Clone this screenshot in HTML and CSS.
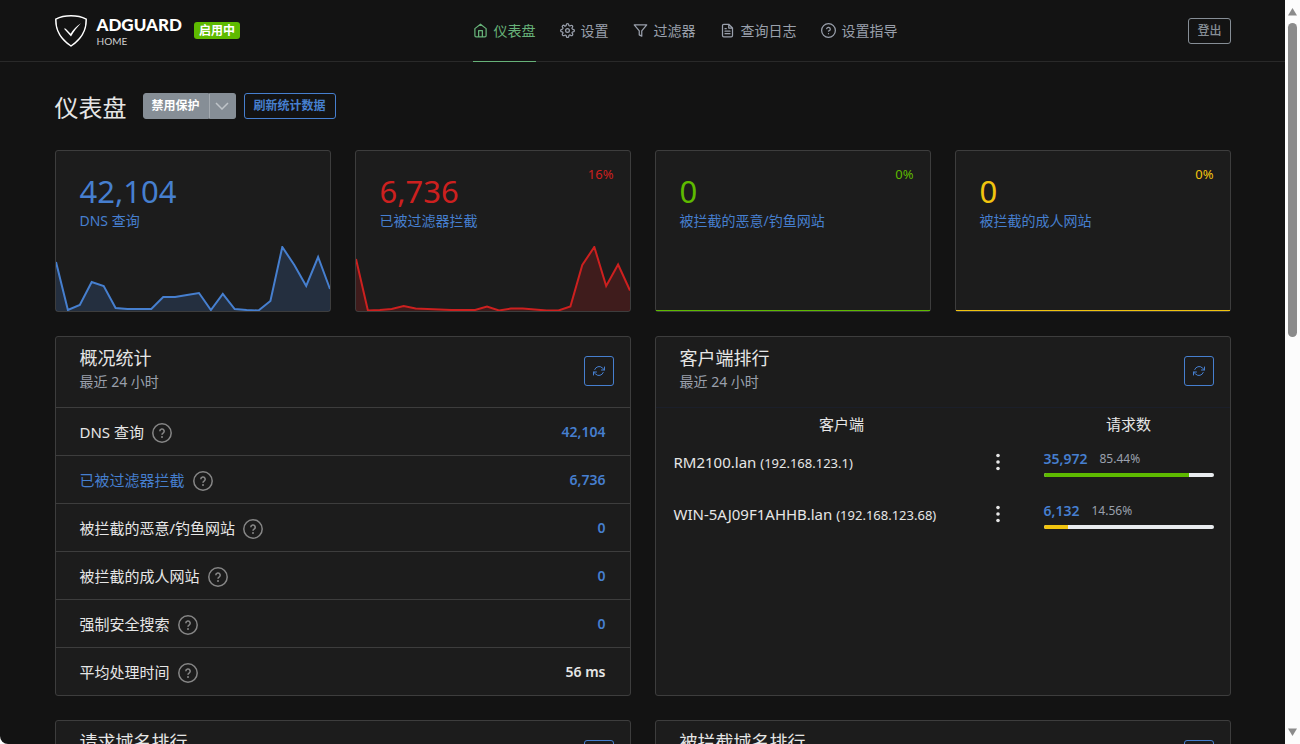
FILE: index.html
```html
<!DOCTYPE html>
<html lang="zh-CN">

<head>
  <meta charset="utf-8">
  <meta name="viewport" content="width=device-width, initial-scale=1">
  <title>AdGuard Home</title>
  <link rel="stylesheet" href="styles.css">
</head>

<body>
  <!-- shared icons -->
  <svg class="sprite" aria-hidden="true">
    <symbol id="icon-help" viewBox="0 0 20 20">
      <circle cx="10" cy="10" r="9.2" fill="none" stroke="currentColor" stroke-width="1.5" />
      <path d="M7.8 8.2a2.200 2.200 0 1 1 3.300 1.900c-.8.5-1.100.9-1.100 1.700" fill="none" stroke="currentColor" stroke-width="1.6" />
      <circle cx="10" cy="13.900" r="1" fill="currentColor" />
    </symbol>
    <symbol id="icon-refresh" viewBox="0 0 24 24">
      <path d="M23 4v6h-6M1 20v-6h6M3.5 9a9 9 0 0 1 14.9-3.4L23 10M1 14l4.6 4.4A9 9 0 0 0 20.5 15" fill="none" stroke="currentColor" stroke-width="2" stroke-linecap="round" stroke-linejoin="round" />
    </symbol>
    <symbol id="icon-dots" viewBox="0 0 24 24">
      <g fill="currentColor">
        <circle cx="12" cy="5.500" r="1.800" />
        <circle cx="12" cy="12" r="1.800" />
        <circle cx="12" cy="18.500" r="1.800" />
      </g>
    </symbol>
  </svg>

  <div class="app">
    <header class="header">
      <div class="container header-row">
        <div class="brand">
          <a href="#" class="logo">
            <svg class="logo-shield" viewBox="0 0 32 32" fill="none" aria-hidden="true">
              <path d="M16 .8C11 .8 5 2 .8 4.200c0 4.600-.5 16.300 15.200 26.800C31.700 20.500 31.200 8.800 31.200 4.200 27 2 21 .8 16 .8Z" stroke="#fff" stroke-width="1.500" />
              <path d="M9 13.800c1-.7 1.900-.1 2.500.6l4.100 4.400c2.500-4 6-8 10.300-10.600-3.500 3.600-7 8.200-9.900 13.200Z" fill="#fff" />
            </svg>
            <span class="logo-text">
              <span class="logo-name">ADGUARD</span>
              <span class="logo-sub">HOME</span>
            </span>
          </a>
          <span class="badge">启用中</span>
        </div>

        <nav class="nav">
          <a href="#" class="nav-link active">
            <svg class="nav-icon" viewBox="0 0 24 24"><path d="M3 9l9-7 9 7v11a2 2 0 0 1-2 2H5a2 2 0 0 1-2-2zM9 22V12h6v10" /></svg>
            仪表盘
          </a>
          <a href="#" class="nav-link">
            <svg class="nav-icon" viewBox="0 0 24 24">
              <circle cx="12" cy="12" r="3" />
              <path d="M19.400 15a1.650 1.650 0 0 0 .33 1.820l.06.06a2 2 0 1 1-2.830 2.830l-.06-.06a1.650 1.650 0 0 0-2.800 1.170V21a2 2 0 1 1-4 0v-.09A1.650 1.650 0 0 0 9 19.400a1.650 1.650 0 0 0-1.820.33l-.06.06a2 2 0 1 1-2.830-2.830l.06-.06a1.650 1.650 0 0 0-1.170-2.800H3a2 2 0 1 1 0-4h.09A1.650 1.650 0 0 0 4.600 9a1.650 1.650 0 0 0-.33-1.820l-.06-.06a2 2 0 1 1 2.830-2.830l.06.06A1.650 1.650 0 0 0 9 4.680 1.650 1.650 0 0 0 10 3.170V3a2 2 0 1 1 4 0v.09a1.650 1.650 0 0 0 2.820 1.170l.06-.06a2 2 0 1 1 2.830 2.830l-.06.06A1.650 1.650 0 0 0 20.830 10H21a2 2 0 1 1 0 4h-.09a1.650 1.650 0 0 0-1.510 1z" />
            </svg>
            设置
          </a>
          <a href="#" class="nav-link">
            <svg class="nav-icon" viewBox="0 0 24 24"><path d="M22 3H2l8 9.460V19l4 2v-8.540L22 3z" /></svg>
            过滤器
          </a>
          <a href="#" class="nav-link">
            <svg class="nav-icon" viewBox="0 0 24 24"><path d="M14 2H6a2 2 0 0 0-2 2v16a2 2 0 0 0 2 2h12a2 2 0 0 0 2-2V8zM14 2v6h6M16 13H8M16 17H8M10 9H8" /></svg>
            查询日志
          </a>
          <a href="#" class="nav-link">
            <svg class="nav-icon" viewBox="0 0 24 24"><circle cx="12" cy="12" r="11" /><path d="M9.100 9a3 3 0 0 1 5.800 1c0 2-3 3-3 3M12 17h.01" /></svg>
            设置指导
          </a>
        </nav>

        <button class="btn btn-secondary">登出</button>
      </div>
    </header>

    <main class="container">
      <div class="page-header">
        <h1 class="page-title">仪表盘</h1>
        <div class="btn-group">
          <button class="btn btn-gray">禁用保护</button>
          <button class="btn btn-gray btn-caret" aria-label="更多">
            <svg class="caret" viewBox="0 0 14 8"><path d="M1 1l6 6 6-6" /></svg>
          </button>
        </div>
        <button class="btn btn-primary">刷新统计数据</button>
      </div>

      <div class="counters">
        <section class="card counter blue">
          <div class="counter-value">42,104</div>
          <a href="#" class="counter-label">DNS 查询</a>
          <svg class="chart" viewBox="0 0 274 65" preserveAspectRatio="none"></svg>
        </section>
        <section class="card counter red">
          <div class="counter-percent">16%</div>
          <div class="counter-value">6,736</div>
          <a href="#" class="counter-label">已被过滤器拦截</a>
          <svg class="chart" viewBox="0 0 274 65" preserveAspectRatio="none"></svg>
        </section>
        <section class="card counter green">
          <div class="counter-percent">0%</div>
          <div class="counter-value">0</div>
          <a href="#" class="counter-label">被拦截的恶意/钓鱼网站</a>
          <div class="flat-line"></div>
        </section>
        <section class="card counter yellow">
          <div class="counter-percent">0%</div>
          <div class="counter-value">0</div>
          <a href="#" class="counter-label">被拦截的成人网站</a>
          <div class="flat-line"></div>
        </section>
      </div>

      <div class="panels">
        <section class="card">
          <div class="card-header">
            <div>
              <h2 class="card-title">概况统计</h2>
              <div class="card-subtitle">最近 24 小时</div>
            </div>
            <button class="btn-refresh" aria-label="刷新"><svg><use href="#icon-refresh" /></svg></button>
          </div>
          <table class="stats">
            <tr>
              <th scope="row"><div class="stat-name">DNS 查询<svg class="help"><use href="#icon-help" /></svg></div></th>
              <td><a href="#">42,104</a></td>
            </tr>
            <tr>
              <th scope="row"><div class="stat-name"><a href="#">已被过滤器拦截</a><svg class="help"><use href="#icon-help" /></svg></div></th>
              <td><a href="#">6,736</a></td>
            </tr>
            <tr>
              <th scope="row"><div class="stat-name">被拦截的恶意/钓鱼网站<svg class="help"><use href="#icon-help" /></svg></div></th>
              <td><a href="#">0</a></td>
            </tr>
            <tr>
              <th scope="row"><div class="stat-name">被拦截的成人网站<svg class="help"><use href="#icon-help" /></svg></div></th>
              <td><a href="#">0</a></td>
            </tr>
            <tr>
              <th scope="row"><div class="stat-name">强制安全搜索<svg class="help"><use href="#icon-help" /></svg></div></th>
              <td><a href="#">0</a></td>
            </tr>
            <tr>
              <th scope="row"><div class="stat-name">平均处理时间<svg class="help"><use href="#icon-help" /></svg></div></th>
              <td>56 ms</td>
            </tr>
          </table>
        </section>

        <section class="card">
          <div class="card-header">
            <div>
              <h2 class="card-title">客户端排行</h2>
              <div class="card-subtitle">最近 24 小时</div>
            </div>
            <button class="btn-refresh" aria-label="刷新"><svg><use href="#icon-refresh" /></svg></button>
          </div>
          <table class="clients">
            <thead>
              <tr>
                <th scope="col">客户端</th>
                <th scope="col" class="col-count">请求数</th>
              </tr>
            </thead>
            <tbody>
              <tr>
                <td>
                  <div class="client">
                    <span>RM2100.lan <small>(192.168.123.1)</small></span>
                    <button class="btn-dots" aria-label="菜单"><svg><use href="#icon-dots" /></svg></button>
                  </div>
                </td>
                <td>
                  <div class="count"><a href="#">35,972</a><span>85.44%</span></div>
                  <div class="progress"><div class="progress-bar bar-green" style="width: 85.44%"></div></div>
                </td>
              </tr>
              <tr>
                <td>
                  <div class="client">
                    <span>WIN-5AJ09F1AHHB.lan <small>(192.168.123.68)</small></span>
                    <button class="btn-dots" aria-label="菜单"><svg><use href="#icon-dots" /></svg></button>
                  </div>
                </td>
                <td>
                  <div class="count"><a href="#">6,132</a><span>14.56%</span></div>
                  <div class="progress"><div class="progress-bar bar-yellow" style="width: 14.56%"></div></div>
                </td>
              </tr>
            </tbody>
          </table>
        </section>

        <section class="card">
          <div class="card-header">
            <div>
              <h2 class="card-title">请求域名排行</h2>
              <div class="card-subtitle">最近 24 小时</div>
            </div>
            <button class="btn-refresh" aria-label="刷新"><svg><use href="#icon-refresh" /></svg></button>
          </div>
        </section>

        <section class="card">
          <div class="card-header">
            <div>
              <h2 class="card-title">被拦截域名排行</h2>
              <div class="card-subtitle">最近 24 小时</div>
            </div>
            <button class="btn-refresh" aria-label="刷新"><svg><use href="#icon-refresh" /></svg></button>
          </div>
        </section>
      </div>
    </main>
  </div>

  <div class="scrollbar" aria-hidden="true">
    <svg class="arrow" viewBox="0 0 9 8"><path d="M4.500 0L9 7.500H0z" /></svg>
    <div class="track"><div class="thumb"></div></div>
    <svg class="arrow" viewBox="0 0 9 8"><path d="M0 .5h9L4.500 8z" /></svg>
  </div>

  <script src="script.js"></script>
</body>

</html>
```

FILE: script.js
```js
// 24 hourly points, measured from the top of a 65 unit high chart
const series = {
  blue: [16, 64, 59, 36, 40, 62, 63, 63, 63, 51, 51, 49, 47, 64, 48, 63, 64, 64.5, 55, 1, 19, 40, 11, 43],
  red: [13, 64.5, 64, 63, 60, 62.5, 63, 63.5, 64, 64, 64, 60.5, 64.5, 62.5, 62.5, 63.5, 64.5, 64.5, 60.5, 19, 1, 40, 18.5, 44.5]
};

function drawChart(name) {
  const svg = document.querySelector(`.${name} .chart`);
  const values = series[name];
  const step = 274 / (values.length - 1);
  const points = values.map((y, i) => `${(i * step).toFixed(1)},${y}`).join(' ');

  svg.innerHTML =
    `<polygon class="chart-area" points="0,65 ${points} 274,65" />` +
    `<polyline class="chart-line" points="${points}" />`;
}

drawChart('blue');
drawChart('red');
```

FILE: styles.css
```css
* {
  margin: 0;
  padding: 0;
  box-sizing: border-box;
}

body {
  display: flex;
  height: 100vh;
  overflow: hidden;
  background: #fcfcfc;
  color: #e6e6e6;
  font-family: "Noto Sans", "Noto Sans CJK SC", sans-serif;
  font-size: 15px;
  line-height: 24px;
}

a {
  color: #467fcf;
  text-decoration: none;
}

button {
  font-family: inherit;
  cursor: pointer;
}

.sprite {
  position: absolute;
  width: 0;
  height: 0;
}

.app {
  flex: 1;
  min-width: 0;
  overflow: hidden;
  background: #131313;
  border-bottom-left-radius: 8px;
}

.container {
  width: 100%;
  max-width: 1200px;
  margin: 0 auto;
  padding: 0 12px;
}

/* header */
.header {
  border-bottom: 1px solid #292929;
}

.header-row {
  display: grid;
  grid-template-columns: 418px 1fr auto;
  align-items: center;
}

.brand {
  display: flex;
  align-items: center;
  gap: 12px;
}

.logo {
  display: flex;
  align-items: center;
  gap: 10px;
  color: #fff;
}

.logo-shield {
  width: 32px;
  height: 32px;
}

.logo-text {
  display: flex;
  flex-direction: column;
  font-family: Lato, sans-serif;
}

.logo-name {
  font-size: 17px;
  font-weight: 900;
  line-height: 20px;
}

.logo-sub {
  font-size: 10px;
  line-height: 12px;
  color: #d0d0d0;
}

.badge {
  padding: 0 5px;
  border-radius: 3px;
  background: #5eba00;
  color: #fff;
  font-size: 12px;
  font-weight: 700;
  line-height: 17px;
}

.nav {
  display: flex;
  gap: 24px;
}

.nav-link {
  display: flex;
  align-items: center;
  gap: 6px;
  height: 62px;
  margin-bottom: -1px;
  border-bottom: 1px solid transparent;
  color: #9aa0ac;
  font-size: 14px;
}

.nav-link.active {
  color: #67b279;
  border-bottom-color: #67b279;
}

.nav-icon {
  width: 15px;
  height: 15px;
  fill: none;
  stroke: currentColor;
  stroke-width: 2;
  stroke-linecap: round;
  stroke-linejoin: round;
}

/* buttons */
.btn {
  height: 26px;
  padding: 0 8px;
  border: 1px solid;
  border-radius: 3px;
  background: transparent;
  font-size: 12px;
  font-weight: 700;
  line-height: 16px;
}

.btn-secondary {
  border-color: #868e96;
  color: #868e96;
  font-weight: 500;
}

.btn-primary {
  padding: 0 9px;
  border-color: #467fcf;
  color: #467fcf;
}

.btn-gray {
  border-color: #868e96;
  background: #868e96;
  color: #fff;
}

.btn-group {
  display: flex;
}

.btn-group .btn:first-child {
  border-radius: 3px 0 0 3px;
}

.btn-group .btn-caret {
  display: flex;
  align-items: center;
  padding: 0 6px 0 5px;
  border-left-color: #a3a9af;
  border-radius: 0 3px 3px 0;
}

.caret {
  width: 14px;
  height: 8px;
  fill: none;
  stroke: #bfc4c9;
  stroke-width: 1.5;
}

.page-header {
  display: flex;
  align-items: center;
  gap: 8px;
  padding: 27px 0;
}

.page-title {
  margin-right: 8px;
  padding-top: 4px;
  font-size: 24px;
  font-weight: 400;
  line-height: 30px;
}

/* cards */
.card {
  border: 1px solid #3d3d3d;
  border-radius: 3px;
  background: #1c1c1c;
}

.counters {
  display: grid;
  grid-template-columns: repeat(4, 1fr);
  gap: 24px;
  margin-bottom: 24px;
}

.counter {
  position: relative;
  height: 162px;
  padding: 20px 24px;
}

.counter-value {
  font-size: 31px;
  line-height: 40px;
}

.counter-label {
  display: block;
  font-size: 14px;
  line-height: 20px;
}

.counter-percent {
  position: absolute;
  top: 12px;
  right: 16px;
  font-size: 13px;
  line-height: 22px;
}

.blue {
  color: #467fcf;
}

.red {
  color: #cd201f;
}

.green {
  color: #5eba00;
}

.yellow {
  color: #f1c40f;
}

.chart {
  position: absolute;
  left: 0;
  bottom: 0;
  width: 100%;
  height: 65px;
}

.chart-area {
  fill: currentColor;
  fill-opacity: 0.2;
}

.chart-line {
  fill: none;
  stroke: currentColor;
  stroke-width: 2;
}

.flat-line {
  position: absolute;
  left: 0;
  right: 0;
  bottom: 0;
  height: 1px;
  background: currentColor;
}

.panels {
  display: grid;
  grid-template-columns: 1fr 1fr;
  gap: 24px;
}

.card-header {
  display: flex;
  justify-content: space-between;
  align-items: flex-start;
  height: 70px;
  padding: 9px 16px 0 24px;
}

.card-title {
  font-size: 18px;
  font-weight: 400;
  line-height: 24px;
}

.card-subtitle {
  color: #9aa0ac;
  font-size: 14px;
  line-height: 24px;
}

.btn-refresh {
  display: flex;
  align-items: center;
  justify-content: center;
  width: 30px;
  height: 30px;
  margin-top: 10px;
  border: 1px solid #467fcf;
  border-radius: 3px;
  background: transparent;
  color: #467fcf;
}

.btn-refresh svg {
  width: 12px;
  height: 12px;
}

table {
  width: 100%;
  border-spacing: 0;
}

th {
  font-weight: 400;
}

/* general statistics */
.stats th,
.stats td {
  height: 48px;
  padding: 0 24px;
  border-top: 1px solid #3d3d3d;
  text-align: left;
}

.stats td {
  font-size: 14px;
  font-weight: 600;
  text-align: right;
}

.stat-name {
  display: flex;
  align-items: center;
  gap: 8px;
}

.help {
  width: 20px;
  height: 20px;
  margin-top: 2px;
  color: #868686;
}

/* top clients */
.clients {
  table-layout: fixed;
  border-top: 1px solid #1b1f2a;
}

.clients th {
  height: 31px;
}

.clients .col-count {
  width: 202px;
}

.clients td {
  height: 52px;
  padding: 10px 16px 0;
  vertical-align: top;
}

.client {
  display: flex;
  align-items: center;
  justify-content: space-between;
  height: 26px;
  padding: 0 2px;
}

.client small {
  font-size: 13px;
}

.btn-dots {
  width: 24px;
  height: 24px;
  border: 0;
  background: transparent;
  color: #e6e6e6;
}

.btn-dots svg {
  display: block;
  width: 24px;
  height: 24px;
}

.count {
  display: flex;
  align-items: center;
  gap: 12px;
  margin-bottom: 4px;
  font-size: 14px;
  font-weight: 600;
  line-height: 20px;
}

.count span {
  color: #9aa0ac;
  font-size: 12px;
  font-weight: 400;
}

.progress {
  height: 4px;
  overflow: hidden;
  border-radius: 3px;
  background: #e9ecef;
}

.progress-bar {
  height: 100%;
}

.bar-green {
  background: #5eba00;
}

.bar-yellow {
  background: #f1c40f;
}

/* scrollbar */
.scrollbar {
  display: flex;
  flex-direction: column;
  align-items: center;
  width: 15px;
  padding: 8px 0;
}

.arrow {
  width: 9px;
  height: 8px;
  fill: #8b8b8b;
}

.track {
  flex: 1;
  padding: 7px 0;
}

.thumb {
  width: 9px;
  height: 45%;
  border-radius: 5px;
  background: #8b8b8b;
}
```
